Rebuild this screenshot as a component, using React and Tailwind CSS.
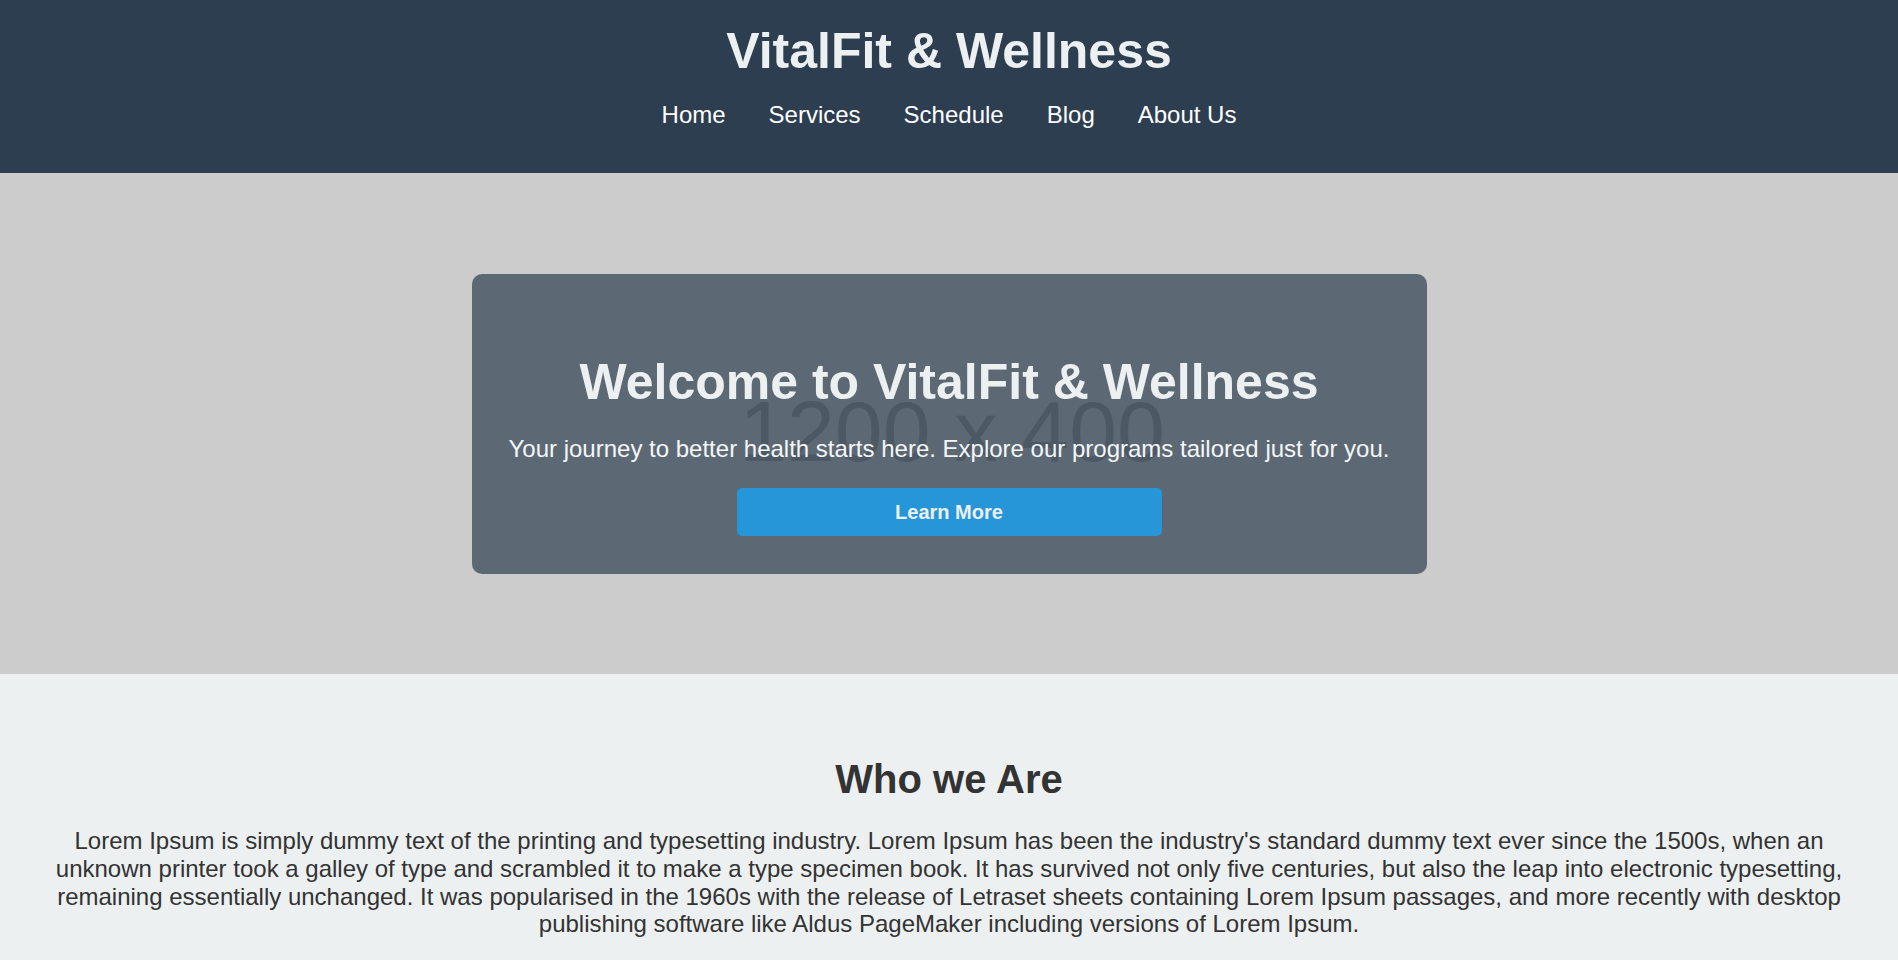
const navLinks = ['Home', 'Services', 'Schedule', 'Blog', 'About Us']

const aboutText =
    "Lorem Ipsum is simply dummy text of the printing and typesetting industry. Lorem Ipsum has been the industry's standard dummy text ever since the 1500s, when an unknown printer took a galley of type and scrambled it to make a type specimen book. It has survived not only five centuries, but also the leap into electronic typesetting, remaining essentially unchanged. It was popularised in the 1960s with the release of Letraset sheets containing Lorem Ipsum passages, and more recently with desktop publishing software like Aldus PageMaker including versions of Lorem Ipsum."

function Header() {
    return (
        <header className="bg-[#2c3e50] h-[173px] pt-[23px] flex flex-col items-center">
            <h1 className="text-[50px] font-bold text-[#ecf0f1] leading-[57px]">VitalFit &amp; Wellness</h1>
            <nav className="mt-[21px] flex items-center gap-[43px]">
                {navLinks.map((link) => (
                    <a key={link} href="#" className="text-[24px] text-white leading-[27.6px]">
                        {link}
                    </a>
                ))}
            </nav>
        </header>
    )
}

function Hero() {
    return (
        <section className="relative bg-[#cccccc] h-[501px] flex items-center justify-center overflow-hidden">
            {/* placeholder image text sitting behind the card */}
            <div className="absolute inset-0 flex items-center justify-center pt-[14px] pl-[6px]">
                <span className="text-[86px] leading-none text-[#969696]">1200 x 400</span>
            </div>
            <div className="relative w-[955px] h-[300px] rounded-[10px] bg-[#2c3e50]/70 flex flex-col items-center pt-[80px]">
                <h2 className="text-[50px] font-bold text-[#ecf0f1] leading-[57px]">Welcome to VitalFit &amp; Wellness</h2>
                <p className="mt-[24px] text-[24px] text-[#f4f6f7] leading-[27.6px]">
                    Your journey to better health starts here. Explore our programs tailored just for you.
                </p>
                <button className="mt-[26px] w-[425px] h-[48px] rounded-[5px] bg-[#2796d9] text-[20px] font-bold text-[#ecf0f1]">
                    Learn More
                </button>
            </div>
        </section>
    )
}

function About() {
    return (
        <section className="bg-[#ecf0f1] px-[50px] pt-[83px] pb-[50px] text-center text-[#333333]">
            <h2 className="text-[40px] font-bold leading-[45px]">Who we Are</h2>
            <p className="mt-[25px] text-[24px] leading-[27.8px]">{aboutText}</p>
        </section>
    )
}

export default function App() {
    return (
        <div className="min-h-screen bg-[#ecf0f1] font-['Liberation_Sans',Arial,sans-serif]">
            <Header />
            <Hero />
            <About />
        </div>
    )
}
